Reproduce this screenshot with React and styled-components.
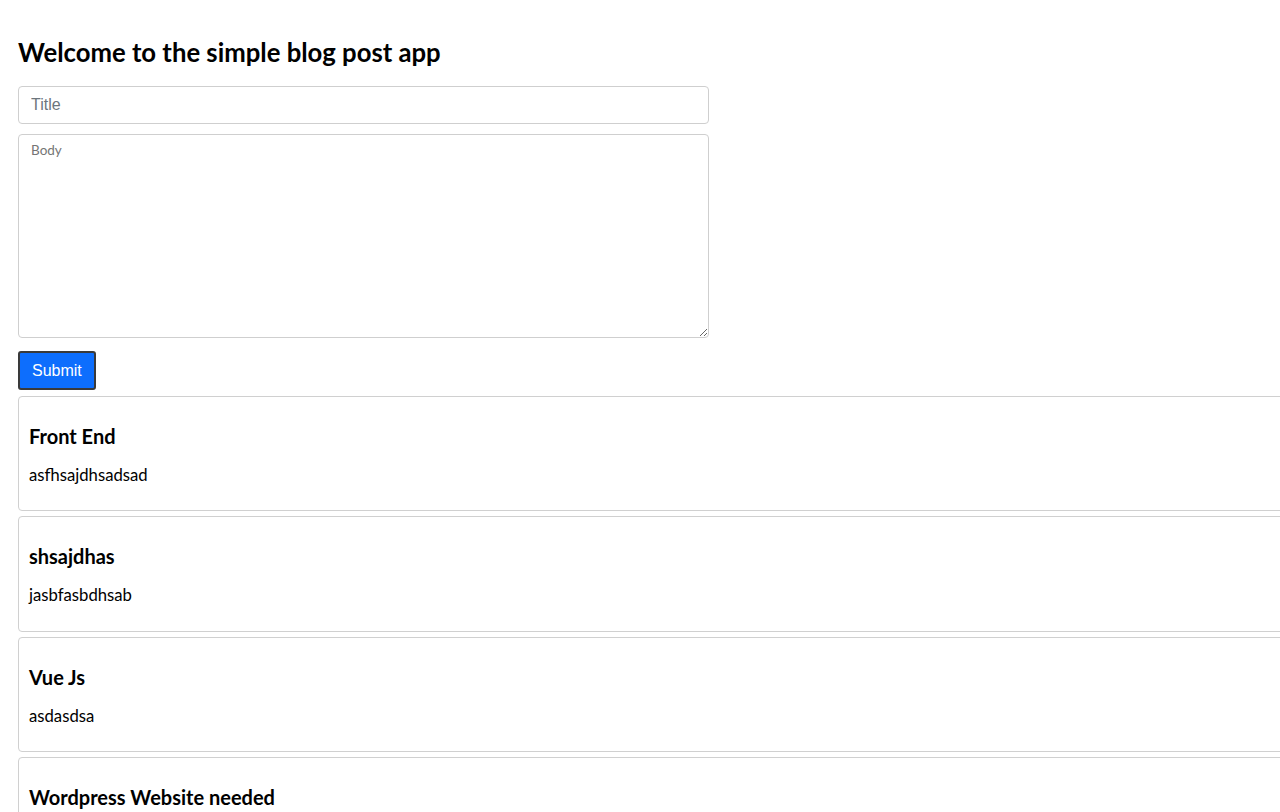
import React from "react";
import styled, { createGlobalStyle } from "styled-components";

const GlobalStyle = createGlobalStyle`
  html {
    overflow: hidden;
    scrollbar-width: none;
  }
  html::-webkit-scrollbar { display: none; }
  body {
    margin: 8px 0 8px 8px;
    background: #ffffff;
    color: #000000;
    font-family: Lato, "Noto Sans", sans-serif;
  }
`;

const Container = styled.div`
  padding: 10px 0 0 10px;
  overflow: hidden;
`;

const Heading = styled.h2`
  font-size: 25.7px;
  font-weight: 700;
  margin: 20px 0 20px;
  line-height: 28px;
`;

const Form = styled.form`
  display: flex;
  flex-direction: column;
  align-items: flex-start;
`;

const TitleInput = styled.input`
  box-sizing: border-box;
  width: 691px;
  height: 38px;
  padding: 0 12px;
  border: 1px solid #cfcfcf;
  border-radius: 4px;
  font-family: "Liberation Sans", Arial, sans-serif;
  font-size: 16px;
  color: #212529;
  outline: none;
  &::placeholder { color: #6c757d; }
`;

const BodyArea = styled.textarea`
  box-sizing: border-box;
  width: 691px;
  height: 204px;
  margin-top: 10px;
  padding: 7px 12px;
  border: 1px solid #cfcfcf;
  border-radius: 4px;
  font-family: Lato, "Noto Sans", sans-serif;
  font-size: 13.5px;
  resize: both;
  outline: none;
  &::placeholder { color: #757575; }
`;

const SubmitButton = styled.button`
  box-sizing: border-box;
  margin-top: 13px;
  height: 39px;
  padding: 0 12px;
  background: #0d6efd;
  color: #ffffff;
  border: 2px solid #3a3a3a;
  border-radius: 3px;
  font-family: "Liberation Sans", Arial, sans-serif;
  font-size: 16px;
  cursor: pointer;
`;

const PostList = styled.div`
  margin-top: 6px;
`;

const Card = styled.div`
  width: 100%;
  padding: 0 10px;
  border: 1px solid #d0d0d0;
  border-radius: 4px;
  margin-bottom: 5px;
  display: flow-root;
`;

const CardTitle = styled.h3`
  font-size: 20px;
  font-weight: 700;
  margin: 28px 0 19px;
  line-height: 22px;
`;

const CardBody = styled.p`
  font-size: 16.7px;
  margin: 0 0 25px;
  line-height: 19.35px;
`;

const posts = [
  { title: "Front End", body: "asfhsajdhsadsad" },
  { title: "shsajdhas", body: "jasbfasbdhsab" },
  { title: "Vue Js", body: "asdasdsa" },
  { title: "Wordpress Website needed", body: "asdasd" },
];

export default function App() {
  return (
    <>
      <GlobalStyle />
      <Container>
        <Heading>Welcome to the simple blog post app</Heading>
        <Form onSubmit={(e) => e.preventDefault()}>
          <TitleInput placeholder="Title" />
          <BodyArea placeholder="Body" />
          <SubmitButton type="submit">Submit</SubmitButton>
        </Form>
        <PostList>
          {posts.map((p) => (
            <Card key={p.title}>
              <CardTitle>{p.title}</CardTitle>
              <CardBody>{p.body}</CardBody>
            </Card>
          ))}
        </PostList>
      </Container>
    </>
  );
}
